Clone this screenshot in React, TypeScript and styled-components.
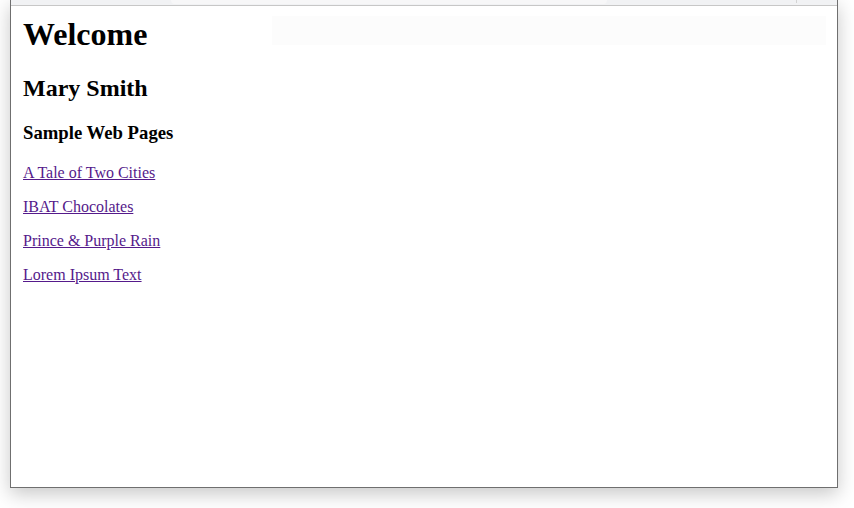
import styled, { createGlobalStyle } from "styled-components";

const GlobalStyle = createGlobalStyle`
  html, body {
    margin: 0;
    background: #fff;
    overflow: hidden;
  }
`;

const Stage = styled.div`
  width: 854px;
  height: 508px;
  background: #fff;
`;

const BrowserWindow = styled.div`
  margin-left: 10px;
  width: 828px;
  height: 488px;
  box-sizing: border-box;
  display: flex;
  flex-direction: column;
  background: #fff;
  border: 1px solid #6f6f6f;
  border-top: none;
  box-shadow: 0 6px 18px rgba(0, 0, 0, 0.22);
`;

const Toolbar = styled.div`
  height: 5px;
  flex: none;
  display: flex;
  align-items: flex-start;
  padding-left: 160px;
  background: #f1f2f4;
  border-bottom: 1px solid #c7c7c7;
`;

const AddressBar = styled.div`
  width: 436px;
  height: 4px;
  background: #f7f7f8;
  border-radius: 0 0 4px 4px;
`;

const Divider = styled.div`
  margin-left: 189px;
  width: 1px;
  height: 3px;
  background: #d4d4d4;
`;

const GhostBox = styled.div`
  position: absolute;
  left: 261px;
  top: 10px;
  width: 554px;
  height: 29px;
  background: #fcfcfc;
`;

const Page = styled.div`
  position: relative;
  flex: 1;
  display: flex;
  flex-direction: column;
  align-items: flex-start;
  padding: 10px 12px 0;
  font-family: "Liberation Serif", "Times New Roman", serif;
  color: #000;
`;

const Title = styled.h1`
  position: relative;
  margin: 0 0 22px;
  font-size: 32px;
  font-weight: bold;
`;

const Name = styled.h2`
  margin: 0 0 20px;
  font-size: 24px;
  font-weight: bold;
`;

const Section = styled.h3`
  margin: 0 0 20px;
  font-size: 18.72px;
  font-weight: bold;
`;

const LinkList = styled.div`
  display: flex;
  flex-direction: column;
  gap: 16px;
`;

const Item = styled.p`
  margin: 0;
  font-size: 16px;
`;

const Link = styled.a`
  color: #551a8b;
  text-decoration: underline;
`;

const links = [
  "A Tale of Two Cities",
  "IBAT Chocolates",
  "Prince & Purple Rain",
  "Lorem Ipsum Text",
];

export default function App() {
  return (
    <Stage>
      <GlobalStyle />
      <BrowserWindow>
        <Toolbar>
          <AddressBar />
          <Divider />
        </Toolbar>
        <Page>
          <GhostBox />
          <Title>Welcome</Title>
          <Name>Mary Smith</Name>
          <Section>Sample Web Pages</Section>
          <LinkList>
            {links.map((l) => (
              <Item key={l}>
                <Link href="#">{l}</Link>
              </Item>
            ))}
          </LinkList>
        </Page>
      </BrowserWindow>
    </Stage>
  );
}
